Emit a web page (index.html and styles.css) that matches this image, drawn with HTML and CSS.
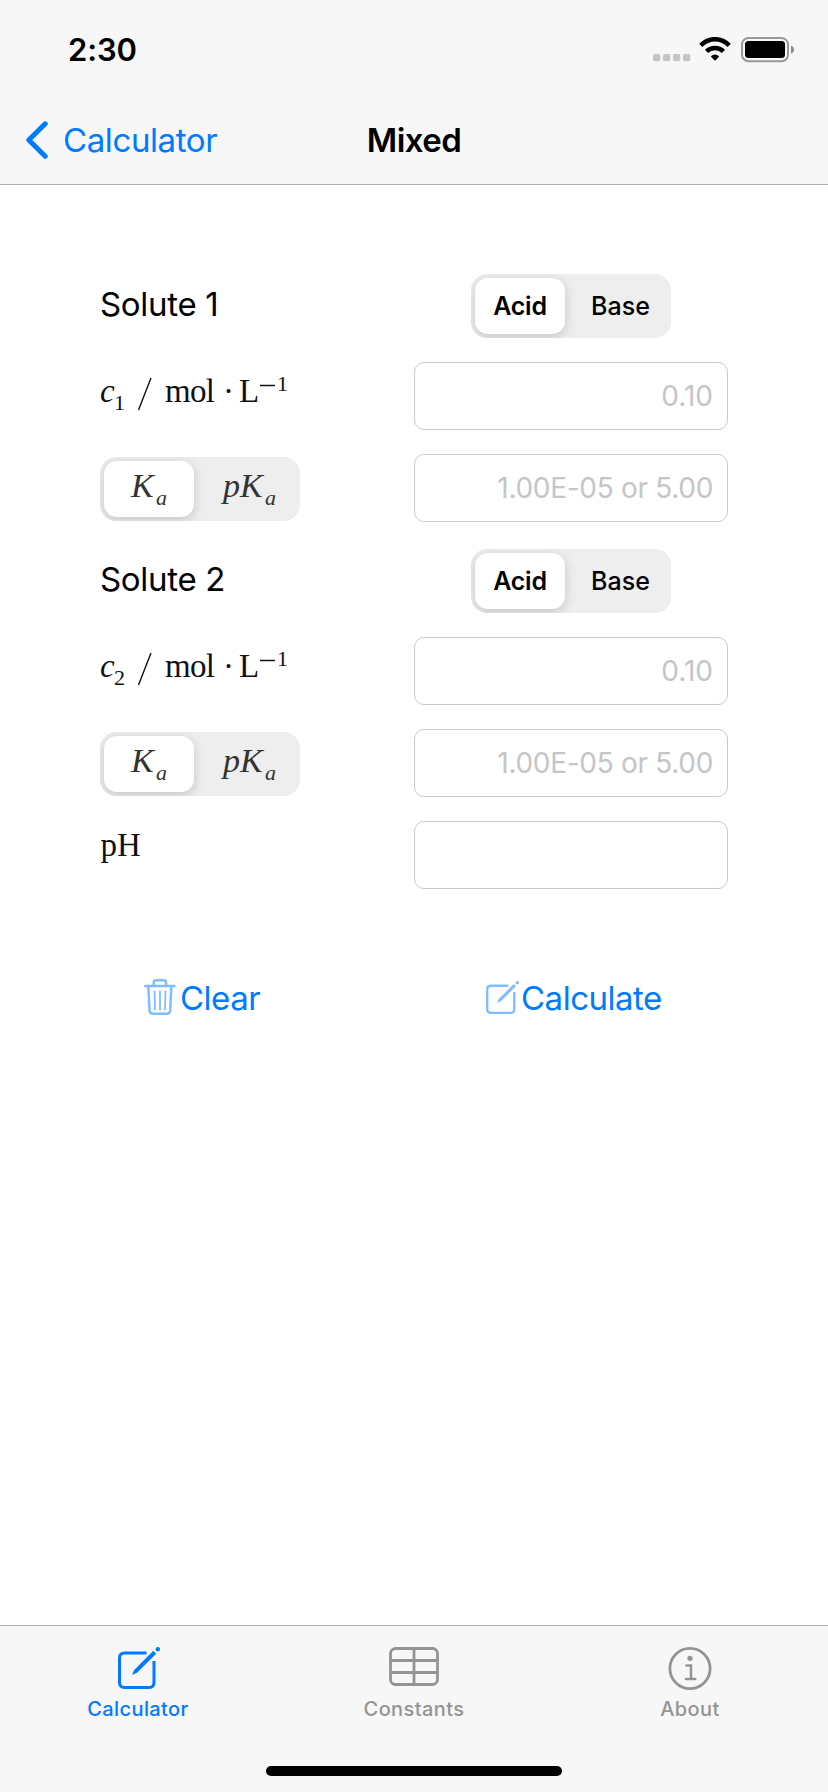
FILE: index.html
```html
<!DOCTYPE html>
<html lang="en">
<head>
<meta charset="utf-8">
<title>Mixed</title>
<link rel="stylesheet" href="styles.css">
</head>
<body>
<svg class="defs" width="0" height="0" aria-hidden="true">
  <symbol id="compose" viewBox="0 0 42 42">
    <path d="M28.500 6H6.500Q1.500 6 1.500 11V35.500Q1.500 40.500 6.500 40.500H31Q36 40.500 36 35.500V14" fill="none" stroke="currentColor" stroke-width="3"/>
    <path d="M35.300 3.800L38.200 6.700L19 25.800L14 28L16.200 23Z" fill="currentColor"/>
    <circle cx="39.800" cy="2.200" r="2.200" fill="currentColor"/>
  </symbol>
</svg>
<div class="screen">
  <header class="top">
    <div class="status">
      <span class="time">2:30</span>
      <div class="indicators">
        <svg class="cell" width="38" height="8" viewBox="0 0 38 8" fill="#c5c5c5"><rect width="7.300" height="7.300" rx="1.800"/><rect x="10" width="7.300" height="7.300" rx="1.800"/><rect x="20" width="7.300" height="7.300" rx="1.800"/><rect x="30" width="7.300" height="7.300" rx="1.800"/></svg>
        <svg class="wifi" width="32" height="24" viewBox="0 0 32 24"><path d="M1.800 8.400Q8 2.200 16 2.200T30.200 8.400M7.500 14.300Q11 11 16 11T24.500 14.300" fill="none" stroke="#000" stroke-width="4.600"/><path d="M11.800 19.400Q16 15.600 20.200 19.400L16 23.800Z"/></svg>
        <svg class="battery" width="54" height="26" viewBox="0 0 54 26"><rect x="1" y="1" width="46" height="23.200" rx="6.500" fill="none" stroke="#999" stroke-width="2"/><rect x="4" y="4" width="40" height="17" rx="3.500"/><path d="M50 8.500Q53 9.500 53 12.600T50 16.700Z" fill="#8d8d8d"/></svg>
      </div>
    </div>
    <nav class="nav">
      <a class="back"><svg width="24" height="40" viewBox="0 0 24 40"><path d="M21.200 3.800L4.800 20L21.200 36.200" fill="none" stroke="#007aff" stroke-width="5" stroke-linecap="round" stroke-linejoin="round"/></svg><span>Calculator</span></a>
      <h1 class="title">Mixed</h1>
    </nav>
  </header>

  <main class="main">
    <div class="form">
      <div class="solute">Solute 1</div>
      <div class="seg"><span class="opt on">Acid</span><span class="opt base">Base</span></div>

      <svg class="formula" width="200" height="68"><text class="math" y="40"><tspan x="0" class="it">c</tspan><tspan x="14" y="48" class="sub">1</tspan><tspan x="65" y="40" textLength="50">mol</tspan><tspan x="123">·</tspan><tspan x="139">L</tspan><tspan x="177" y="29" class="sub">1</tspan></text><path d="M38.500 48L51 16M160 23.500H175" class="rule"/></svg>
      <div class="field">0.10</div>

      <div class="seg ka"><span class="opt on"><svg width="90" height="56"><text class="math soft"><tspan x="27" y="36" class="it big">K</tspan><tspan x="52" y="44" class="it sub">a</tspan></text></svg></span><span class="opt"><svg width="102" height="56"><text class="math soft"><tspan x="29" y="36" class="it big">p</tspan><tspan x="46" y="36" class="it big">K</tspan><tspan x="71" y="44" class="it sub">a</tspan></text></svg></span></div>
      <div class="field long">1.00E-05 or 5.00</div>

      <div class="solute second">Solute 2</div>
      <div class="seg second"><span class="opt on">Acid</span><span class="opt base">Base</span></div>

      <svg class="formula" width="200" height="68"><text class="math" y="40"><tspan x="0" class="it">c</tspan><tspan x="14" y="48" class="sub">2</tspan><tspan x="65" y="40" textLength="50">mol</tspan><tspan x="123">·</tspan><tspan x="139">L</tspan><tspan x="177" y="29" class="sub">1</tspan></text><path d="M38.500 48L51 16M160 23.500H175" class="rule"/></svg>
      <div class="field">0.10</div>

      <div class="seg ka"><span class="opt on"><svg width="90" height="56"><text class="math soft"><tspan x="27" y="36" class="it big">K</tspan><tspan x="52" y="44" class="it sub">a</tspan></text></svg></span><span class="opt"><svg width="102" height="56"><text class="math soft"><tspan x="29" y="36" class="it big">p</tspan><tspan x="46" y="36" class="it big">K</tspan><tspan x="71" y="44" class="it sub">a</tspan></text></svg></span></div>
      <div class="field long">1.00E-05 or 5.00</div>

      <svg class="formula" width="200" height="68"><text class="math" x="0.500" y="35">pH</text></svg>
      <div class="field"></div>
    </div>

    <div class="actions">
      <a class="action clear"><svg width="32" height="38" viewBox="0 0 32 38" fill="none" stroke="#80bcff" stroke-width="2.500"><path d="M1.200 8H30.500M9.700 8V4.500Q9.700 2.300 12.200 2.300H19.500Q22 2.300 22 4.500V8M4.300 8L5.500 32.500Q5.700 35.800 9 35.800H22.700Q26 35.800 26.200 32.500L27.400 8" stroke-linecap="round"/><path d="M10.500 13.500L11 31.500M16 13.500V31.500M21.500 13.500L21 31.500" stroke-width="1.800" stroke-linecap="round"/></svg><span>Clear</span></a>
      <a class="action calc"><svg class="pen" width="33" height="33"><use href="#compose" width="33" height="33"/></svg><span>Calculate</span></a>
    </div>
  </main>

  <footer class="tabs">
    <div class="tabrow">
      <a class="tab active"><svg width="42" height="43"><use href="#compose" width="42" height="42"/></svg><span>Calculator</span></a>
      <a class="tab"><svg width="50" height="43" fill="none" stroke="#949494" stroke-width="2.800"><rect x="1.500" y="1.500" width="47" height="36" rx="5"/><path d="M1.500 13.500H48.500M1.500 25.500H48.500M25 1.500V37.500"/></svg><span>Constants</span></a>
      <a class="tab"><svg width="44" height="43" fill="none" stroke="#949494" stroke-width="2.800"><circle cx="22" cy="21.500" r="20.100"/><circle cx="22" cy="11.300" r="2.600" fill="#949494" stroke="none"/><path d="M18.500 18.500H23V32M18 32H27.300" stroke-linecap="round" stroke-width="2.500"/></svg><span>About</span></a>
    </div>
    <div class="home"></div>
  </footer>
</div>
</body>
</html>
```
FILE: styles.css
```css
body { margin: 0; background: #fff; }
.defs { display: block; }
.screen {
  width: 828px;
  height: 1792px;
  display: flex;
  flex-direction: column;
  overflow: hidden;
  font-family: Inter, "Liberation Sans", sans-serif;
  color: #000;
}

.top { box-sizing: border-box; height: 185px; background: #f7f7f7; border-bottom: 1px solid #adadad; }
.status { height: 99px; display: flex; justify-content: space-between; padding: 0 33px 0 68px; }
.time { font-size: 31px; font-weight: 600; line-height: 99px; letter-spacing: -0.1px; }
.indicators { display: flex; align-items: flex-start; }
.cell { margin: 54px 8px 0 0; }
.wifi { margin: 37px 10px 0 0; }
.battery { margin-top: 37px; }
.nav { height: 82px; display: grid; grid-template-columns: 1fr auto 1fr; align-items: center; }
.back { display: flex; align-items: center; gap: 15px; padding-left: 24px; color: #007aff; font-size: 33px; letter-spacing: -0.4px; }
.title { margin: 0; font-size: 33px; font-weight: 600; letter-spacing: -0.6px; }

.main { flex: 1; padding: 89px 100px 0; }
.form { display: grid; grid-template-columns: 314px 314px; row-gap: 24px; }
.solute { height: 60px; line-height: 60px; font-size: 33px; letter-spacing: -0.3px; }
.second { margin-top: 3px; }
.seg {
  width: 200px;
  height: 64px;
  box-sizing: border-box;
  justify-self: center;
  display: flex;
  padding: 4px 0 4px 4px;
  border-radius: 16px;
  background: #eee;
  overflow: hidden;
}
.ka { justify-self: start; margin-top: 3px; }
.opt { width: 106px; height: 56px; text-align: center; line-height: 56px; font-size: 25px; font-weight: 500; letter-spacing: 0; }
.on { width: 90px; border-radius: 13px; background: #fff; box-shadow: 0 3px 12px rgba(0, 0, 0, 0.18); font-weight: 600; letter-spacing: -0.2px; }
.base { box-sizing: border-box; padding-left: 5px; }
.opt svg { display: block; }
.field {
  box-sizing: border-box;
  height: 68px;
  padding: 0 14px;
  border: 1px solid #c9c9cb;
  border-radius: 10px;
  text-align: right;
  line-height: 67px;
  font-size: 28px;
  color: #c5c5c7;
}
.long { letter-spacing: -0.3px; }
.formula { display: block; }
.math { font-family: "Liberation Serif", serif; font-size: 33px; font-weight: 400; letter-spacing: 0; fill: #111; }
.it { font-style: italic; }
.sub { font-size: 22px; }
.big { font-size: 34px; }
.soft { fill: #333; }
.rule { fill: none; stroke: #111; stroke-width: 1.400; }

.actions { display: grid; grid-template-columns: 314px 314px; margin-top: 89px; }
.action { display: flex; align-items: flex-start; color: #007aff; font-size: 33px; line-height: 40px; letter-spacing: -0.5px; }
.clear { padding-left: 44px; gap: 4px; }
.calc { padding-left: 72px; gap: 2px; }
.pen { margin-top: 3px; color: #80bcff; }

.tabs { box-sizing: border-box; height: 167px; background: #f7f7f7; border-top: 1px solid #adadad; }
.tabrow { display: grid; grid-template-columns: repeat(3, 1fr); height: 140px; }
.tab { display: flex; flex-direction: column; align-items: center; padding-top: 21px; gap: 8px; color: #949494; font-size: 20px; line-height: 22px; font-weight: 500; letter-spacing: 0.4px; }
.active { color: #007aff; }
.active svg { margin-left: 2px; }
.home { width: 296px; height: 10px; margin: 0 auto; border-radius: 5px; background: #000; }
```
